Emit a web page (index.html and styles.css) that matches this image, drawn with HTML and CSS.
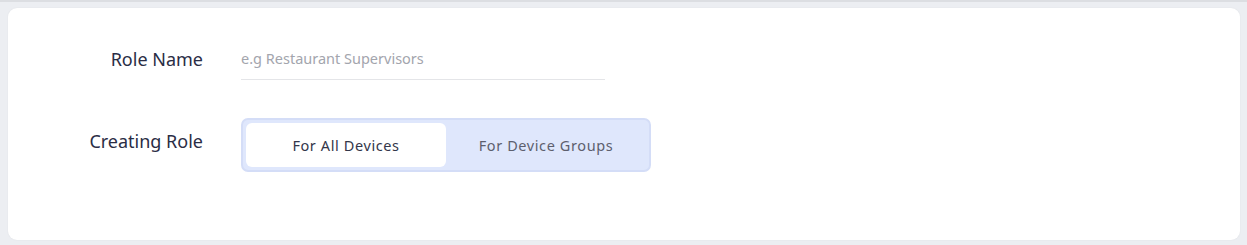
FILE: index.html
```html
<!DOCTYPE html>
<html lang="en">
<head>
    <meta charset="UTF-8">
    <meta name="viewport" content="width=device-width, initial-scale=1.0">
    <title>Create Role</title>
    <link rel="stylesheet" href="styles.css">
</head>
<body>
    <div class="top-strip"></div>
    <div class="role-card">
        <form class="role-form">
            <label class="field-label" for="role_name">Role Name</label>
            <div class="field-input">
                <input type="text" id="role_name" name="role_name" placeholder="e.g Restaurant Supervisors" />
            </div>

            <span class="field-label label-top">Creating Role</span>
            <div class="toggle-group">
                <button type="button" class="toggle-btn active">For All Devices</button>
                <button type="button" class="toggle-btn">For Device Groups</button>
            </div>
        </form>
    </div>
</body>
</html>
```

FILE: styles.css
```css
body {
    font-family: 'Noto Sans', 'Open Sans', sans-serif;
    background-color: #eceef2; /* Page background */
    margin: 0;
    padding: 0;
    height: 245px;
    box-sizing: border-box;
}

.top-strip {
    height: 2px;
    background: #dcdee2;
}

.role-card {
    background: #fff;
    margin: 6px 7px 0 8px;
    height: 232px;
    border-radius: 9px;
    box-shadow: 0 0 2px rgba(0, 0, 0, 0.06);
    box-sizing: border-box;
    padding-top: 29px;
}

.role-form {
    display: grid;
    grid-template-columns: 195px 364px;
    column-gap: 38px;
    row-gap: 38px;
    align-items: center;
}

.field-label {
    text-align: right;
    font-size: 18px;
    color: #2a2d45; /* Dark navy labels */
}

.label-top {
    align-self: start;
    padding-top: 11px;
}

.field-input input {
    width: 100%;
    height: 43px;
    border: none;
    border-bottom: 1px solid #e4e5e8;
    font-family: inherit;
    font-size: 14.5px;
    color: #2a2d45;
    padding: 0;
    outline: none;
    box-sizing: border-box;
}

.field-input input::placeholder {
    color: #a3a5ad;
}

.toggle-group {
    display: flex;
    width: 410px;
    height: 54px;
    padding: 3px;
    background: #dfe7fc; /* Light blue track */
    border: 2px solid #d4ddf7;
    border-radius: 7px;
    box-sizing: border-box;
}

.toggle-btn {
    flex: 1;
    border: none;
    background: transparent;
    font-family: inherit;
    font-size: 14.5px;
    letter-spacing: 0.6px;
    color: #5d5f6e;
    border-radius: 6px;
    cursor: pointer;
}

.toggle-btn.active {
    background: #fff;
    color: #33364a;
}
```
